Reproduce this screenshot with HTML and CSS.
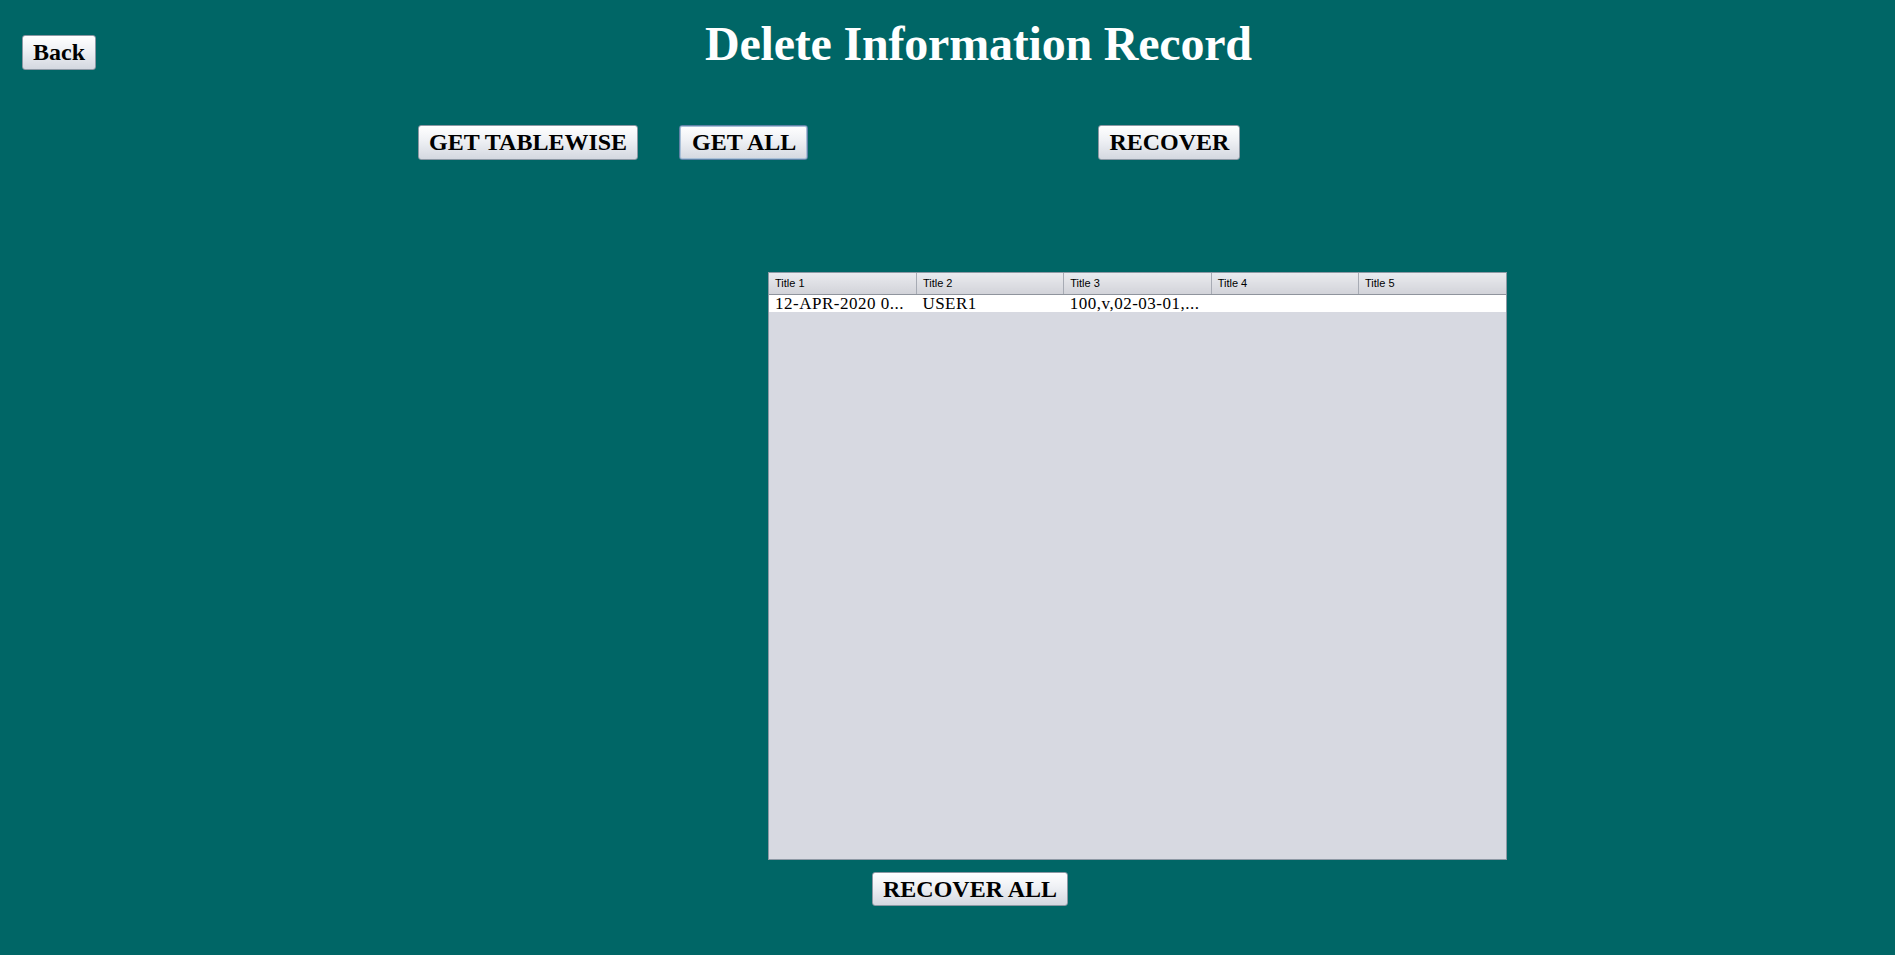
FILE: index.html
```html
<!DOCTYPE html>
<html>
<head>
<meta charset="utf-8">
<title>Delete Information Record</title>
<link rel="stylesheet" href="styles.css">
</head>
<body>
<div class="page">
  <div class="top-row">
    <button class="btn btn-back">Back</button>
    <h1 class="title">Delete Information Record</h1>
  </div>
  <div class="actions">
    <button class="btn btn-tablewise">GET TABLEWISE</button>
    <button class="btn btn-getall focused">GET ALL</button>
    <button class="btn btn-recover">RECOVER</button>
  </div>
  <div class="main">
    <div class="table-box">
      <table class="grid">
        <thead>
          <tr>
            <th>Title 1</th>
            <th>Title 2</th>
            <th>Title 3</th>
            <th>Title 4</th>
            <th>Title 5</th>
          </tr>
        </thead>
        <tbody>
          <tr>
            <td>12-APR-2020 0...</td>
            <td>USER1</td>
            <td>100,v,02-03-01,...</td>
            <td></td>
            <td></td>
          </tr>
        </tbody>
      </table>
    </div>
    <button class="btn btn-recover-all">RECOVER ALL</button>
  </div>
</div>
</body>
</html>
```

FILE: styles.css
```css
html, body {
  margin: 0;
  padding: 0;
  background: #006666;
  height: 100%;
  overflow: hidden;
}

.page {
  display: flex;
  flex-direction: column;
  align-items: flex-start;
  font-family: "Liberation Serif", "Times New Roman", serif;
}

.top-row {
  display: flex;
  align-items: flex-start;
  padding-top: 20px;
  height: 50px;
}

.btn {
  box-sizing: border-box;
  font-family: "Liberation Serif", "Times New Roman", serif;
  font-weight: bold;
  font-size: 24px;
  line-height: 27px;
  height: 35px;
  padding: 3px 10px;
  margin: 0;
  color: #000;
  border: 1px solid #8c98a4;
  border-radius: 3px;
  background: linear-gradient(to bottom, #ffffff 0%, #eef0f4 45%, #d4d8e0 100%);
  white-space: nowrap;
  cursor: default;
}

.btn.focused {
  border: 1px solid #5f82a6;
  box-shadow: inset 0 0 0 1px #a9c0d8;
  padding: 3px 11px 3px 12px;
}

.btn-back {
  margin-top: 15px;
  margin-left: 22px;
}

.title {
  margin: 0 0 0 609px;
  font-size: 48px;
  line-height: 48px;
  font-weight: bold;
  letter-spacing: -0.2px;
  color: #ffffff;
  white-space: nowrap;
}

.actions {
  display: flex;
  align-items: center;
  margin-top: 55px;
  margin-left: 418px;
}

.btn-getall {
  margin-left: 41px;
}

.btn-recover {
  margin-left: 290px;
}

.main {
  display: flex;
  flex-direction: column;
  align-items: flex-start;
  margin-top: 112px;
}

.table-box {
  box-sizing: border-box;
  margin-left: 768px;
  width: 739px;
  height: 588px;
  border: 1px solid #8e99a5;
  background: #d7d9e1;
}

.grid {
  width: 100%;
  table-layout: fixed;
  border-collapse: collapse;
}

.grid th {
  box-sizing: border-box;
  height: 21px;
  padding: 0 0 0 6px;
  text-align: left;
  font-family: "Liberation Sans", Arial, sans-serif;
  font-weight: normal;
  font-size: 11px;
  color: #000;
  background: linear-gradient(to bottom, #eaebef 0%, #dedfe4 50%, #d2d3d9 100%);
  border-right: 1px solid #a7abb4;
  border-bottom: 1px solid #8f949d;
}

.grid th:last-child {
  border-right: none;
}

.grid td {
  box-sizing: border-box;
  height: 17px;
  padding: 0 0 0 6px;
  font-family: "Liberation Serif", "Times New Roman", serif;
  font-size: 17px;
  line-height: 17px;
  letter-spacing: 0.5px;
  color: #000;
  background: #ffffff;
  white-space: nowrap;
  overflow: hidden;
}

.btn-recover-all {
  margin-top: 12px;
  margin-left: 872px;
  height: 34px;
  line-height: 26px;
}
```
